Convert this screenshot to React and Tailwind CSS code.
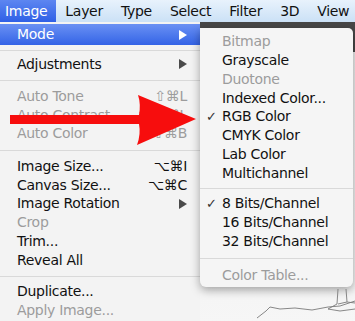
const font = { fontFamily: '"DejaVu Sans", "Liberation Sans", sans-serif' }

function Arrow({ white }) {
  return (
    <svg width="8" height="10" viewBox="0 0 8 10" aria-hidden="true">
      <path d="M0 0 L8 5 L0 10 Z" fill={white ? "#ffffff" : "#4a4a4a"} />
    </svg>
  )
}

function Item({ label, shortcut, sub, disabled }) {
  return (
    <div className="flex h-[18.75px] items-center justify-between pl-[17px] pr-[13px]">
      <span className={disabled ? "text-[#9c9c9c]" : "text-[#111]"}>{label}</span>
      {shortcut && (
        <span className={disabled ? "text-[#9c9c9c]" : "text-[#111]"}>{shortcut}</span>
      )}
      {sub && <Arrow />}
    </div>
  )
}

function Sep({ h }) {
  return (
    <div className={`flex items-center ${h}`}>
      <div className="h-px w-full bg-[#d9d9d9]" />
    </div>
  )
}

function SubItem({ label, checked, disabled }) {
  return (
    <div className="flex h-[18.75px] items-center pl-[6px]">
      <span className="w-[16px] text-[13px] text-[#333]">{checked ? "✓" : ""}</span>
      <span className={disabled ? "text-[#9c9c9c]" : "text-[#111]"}>{label}</span>
    </div>
  )
}

export default function App() {
  const bar = ["Layer", "Type", "Select", "Filter", "3D", "View"]

  return (
    <div
      className="relative h-[321px] w-[355px] overflow-hidden bg-[#f3f3f3] text-[14px] tracking-[-0.3px]"
      style={font}
    >
      {/* menubar */}
      <div className="flex h-[22px] items-center bg-gradient-to-b from-[#e8f2fc] to-[#cbe1f6]">
        <div className="flex h-full items-center bg-gradient-to-b from-[#5d86f1] to-[#2f5fe6] pl-[5px] pr-[9px] text-white">
          Image
        </div>
        {bar.map((b) => (
          <div key={b} className="px-[9px] text-[#111]">
            {b}
          </div>
        ))}
      </div>

      <div className="flex">
        {/* Image menu */}
        <div className="w-[200px] bg-[#f3f3f3] pt-[2px]">
          <div className="flex h-[21px] items-center justify-between bg-gradient-to-b from-[#6a90f3] to-[#3463e6] pl-[17px] pr-[13px] text-white">
            <span>Mode</span>
            <Arrow white />
          </div>
          <Sep h="h-[10px]" />
          <Item label="Adjustments" sub />
          <Sep h="h-[13.25px]" />
          <Item label="Auto Tone" shortcut="⇧⌘L" disabled />
          <Item label="Auto Contrast" shortcut="⌥⇧⌘L" disabled />
          <Item label="Auto Color" shortcut="⇧⌘B" disabled />
          <Sep h="h-[13.75px]" />
          <Item label="Image Size..." shortcut="⌥⌘I" />
          <Item label="Canvas Size..." shortcut="⌥⌘C" />
          <Item label="Image Rotation" sub />
          <Item label="Crop" disabled />
          <Item label="Trim..." />
          <Item label="Reveal All" />
          <Sep h="h-[13px]" />
          <Item label="Duplicate..." />
          <Item label="Apply Image..." disabled />
        </div>

        {/* Mode submenu */}
        <div className="flex flex-1 flex-col bg-[linear-gradient(to_bottom,#474747_0,#474747_30px,#ececec_30px,#f6f6f6_100%)]">
          <div className="h-[6px]" />
          <div className="w-[153px] rounded-b-[6px] rounded-tr-[5px] bg-[#f5f5f5] pt-[4.6px] pb-[2px] shadow-[0_3px_10px_rgba(0,0,0,0.35)]">
            <SubItem label="Bitmap" disabled />
            <SubItem label="Grayscale" />
            <SubItem label="Duotone" disabled />
            <SubItem label="Indexed Color..." />
            <SubItem label="RGB Color" checked />
            <SubItem label="CMYK Color" />
            <SubItem label="Lab Color" />
            <SubItem label="Multichannel" />
            <Sep h="h-[12px]" />
            <SubItem label="8 Bits/Channel" checked />
            <SubItem label="16 Bits/Channel" />
            <SubItem label="32 Bits/Channel" />
            <Sep h="h-[15px]" />
            <SubItem label="Color Table..." disabled />
          </div>
          <svg className="mt-[2px]" width="155" height="34" viewBox="0 0 155 34" aria-hidden="true">
            <g fill="none" stroke="#7a7a7a" strokeWidth="0.9">
              <path d="M57 29 L66 22 L70 18 L80 20 L95 19 L112 21 L128 18 L140 17 L155 12" />
              <path d="M138 0 L137 15 L128 20 L140 22 L155 20" />
              <path d="M146 0 L147 13 L155 14" />
              <path d="M138 15 L147 13" />
            </g>
          </svg>
        </div>
      </div>

      {/* red arrow overlay */}
      <svg className="absolute left-0 top-0" width="355" height="321" viewBox="0 0 355 321" aria-hidden="true">
        <path
          d="M10 115 L139 115 Q141 104 138 95 L196 119 L137 145 Q141 134 139 124 L10 124 Z"
          fill="#f70d0d"
        />
      </svg>
    </div>
  )
}
